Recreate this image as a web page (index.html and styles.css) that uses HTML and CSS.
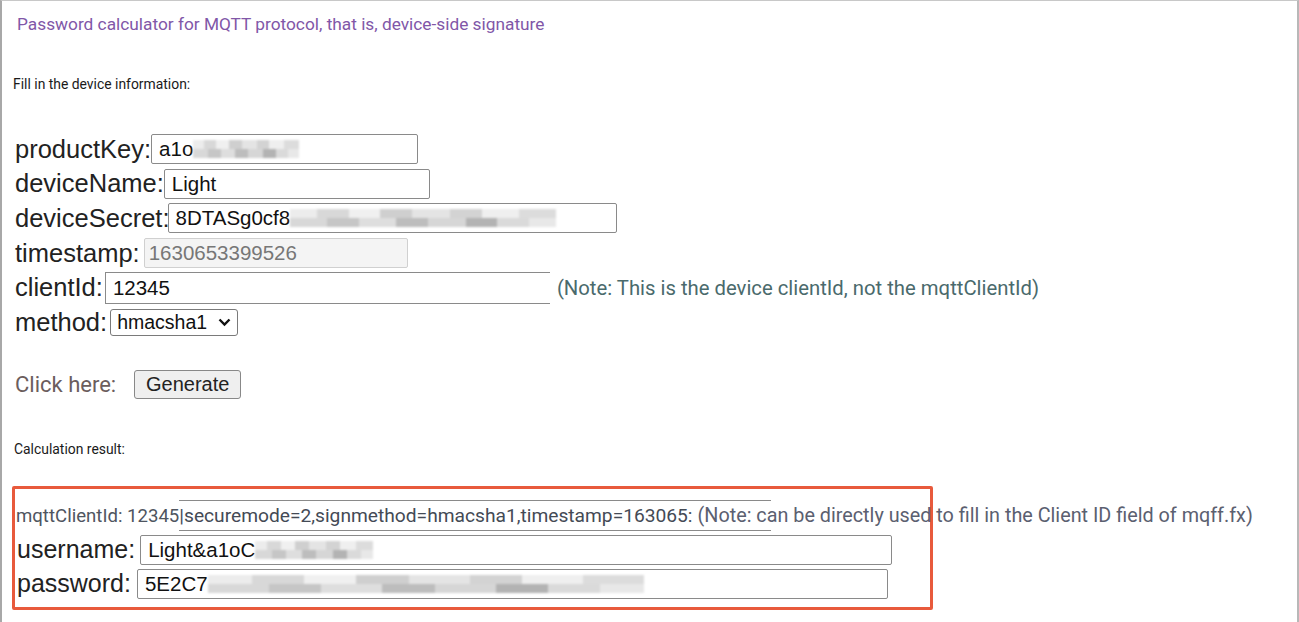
FILE: index.html
```html
<!DOCTYPE html>
<html lang="en">
<head>
    <meta charset="UTF-8">
    <meta name="viewport" content="width=device-width, initial-scale=1.0">
    <title>MQTT Password Calculator</title>
    <link rel="stylesheet" href="styles.css">
</head>
<body>
    <div class="page">
        <h1 class="title">Password calculator for MQTT protocol, that is, device-side signature</h1>

        <p class="hint">Fill in the device information:</p>

        <div class="device-form">
            <div class="row">
                <label>productKey:</label>
                <div class="field w-pk">a1o<span class="mosaic m-pk"></span></div>
            </div>
            <div class="row">
                <label>deviceName:</label>
                <div class="field w-dn">Light</div>
            </div>
            <div class="row">
                <label>deviceSecret:</label>
                <div class="field w-ds">8DTASg0cf8<span class="mosaic m-ds"></span></div>
            </div>
            <div class="row">
                <label>timestamp:</label>
                <div class="field w-ts disabled">1630653399526</div>
            </div>
            <div class="row">
                <label>clientId:</label>
                <div class="field w-cid open">12345</div>
                <span class="note">(Note: This is the device clientId, not the mqttClientId)</span>
            </div>
            <div class="row">
                <label>method:</label>
                <div class="select">hmacsha1
                    <svg width="13" height="9" viewBox="0 0 13 9"><path d="M1.5 1.5 L6.5 6.5 L11.5 1.5" fill="none" stroke="#111" stroke-width="2.4"/></svg>
                </div>
            </div>
        </div>

        <div class="action">
            <span class="click">Click here:</span>
            <button type="button">Generate</button>
        </div>

        <p class="hint result-hint">Calculation result:</p>

        <div class="result">
            <div class="client-line">mqttClientId: 12345<span class="idbox">|securemode=2,signmethod=hmacsha1,timestamp=163065: <span class="note2">(Note: can be directly used to fill in the Client ID field of mqff.fx)</span></span></div>
            <div class="row">
                <label>username:</label>
                <div class="field w-user">Light&amp;a1oC<span class="mosaic m-user"></span></div>
            </div>
            <div class="row">
                <label>password:</label>
                <div class="field w-pass">5E2C7<span class="mosaic m-pass"></span></div>
            </div>
        </div>
    </div>
</body>
</html>
```

FILE: styles.css
```css
* {
    margin: 0;
    padding: 0;
    box-sizing: border-box;
}

body {
    background: #fff;
    font-family: 'Liberation Sans', Arial, sans-serif;
}

.page {
    border-top: 1px solid #c8c8c8;
    border-left: 2px solid #a8a8a8;
    border-right: 2px solid #b8b8b8;
    width: 1299px;
    height: 640px;
    padding: 13px 0 0 11px;
}

.title {
    font-family: Roboto, sans-serif;
    font-weight: 400;
    font-size: 17.3px;
    color: #8157a8;
    margin-left: 4px;
    line-height: 20px;
}

.hint {
    font-family: Roboto, sans-serif;
    font-size: 13.9px;
    color: #1a1a1a;
    margin-top: 42px;
    line-height: 16px;
}

.device-form {
    margin-top: 40px;
    margin-left: 2px;
}

.row {
    display: flex;
    align-items: center;
    height: 34.6px;
}

.row label {
    font-size: 25.5px;
    color: #222;
}

.field {
    height: 30px;
    border: 1.5px solid #8a8a8a;
    border-radius: 2px;
    font-size: 20.5px;
    color: #111;
    padding: 0 7px;
    display: flex;
    align-items: center;
    white-space: nowrap;
}

.field.disabled {
    background: #f4f4f4;
    border-color: #d0d0d0;
    color: #777;
    padding-left: 4px;
}

.field.open {
    border-right: none;
    border-radius: 0;
    height: 32px;
}

.w-pk { width: 267px; }
.w-dn { width: 266px; }
.w-ds { width: 449px; margin-left: -2px; }
.w-ts { width: 264px; margin-left: 4px; }
.w-cid { width: 445px; margin-left: 2px; }
.w-user { width: 752px; margin-left: 5px; }
.w-pass { width: 751px; margin-left: 6px; }

.mosaic {
    display: inline-block;
    height: 18px;
    filter: blur(1px);
    background:
        linear-gradient(90deg, #ececec 0 10%, #d8d8d8 10% 22%, #f0f0f0 22% 34%, #cfcfcf 34% 46%, #e4e4e4 46% 60%, #d3d3d3 60% 72%, #efefef 72% 86%, #dcdcdc 86%) top / 100% 50% no-repeat,
        linear-gradient(90deg, #d8d8d8 0 14%, #c6c6c6 14% 26%, #dedede 26% 40%, #bdbdbd 40% 52%, #d6d6d6 52% 66%, #b3b3b3 66% 78%, #dadada 78% 90%, #e8e8e8 90%) bottom / 100% 50% no-repeat;
}

.m-pk { width: 106px; }
.m-ds { width: 266px; }
.m-user { width: 118px; }
.m-pass { width: 436px; }

.note {
    font-family: Roboto, sans-serif;
    font-size: 20.3px;
    color: #4a6a6c;
    margin-left: 7px;
}

.select {
    width: 128px;
    height: 27px;
    margin-left: 3px;
    border: 1.5px solid #7a7a7a;
    border-radius: 3px;
    font-size: 19.5px;
    color: #111;
    padding: 0 6px 0 6px;
    display: flex;
    align-items: center;
    justify-content: space-between;
}

.action {
    display: flex;
    align-items: center;
    margin-top: 30px;
    margin-left: 2px;
}

.click {
    font-family: Roboto, sans-serif;
    font-size: 22px;
    color: #6b5d5d;
}

button {
    margin-left: 18px;
    width: 107px;
    height: 29px;
    background: #efefef;
    border: 1.5px solid #888;
    border-radius: 3px;
    font-family: 'Liberation Sans', Arial, sans-serif;
    font-size: 20px;
    color: #222;
}

.result-hint {
    margin-top: 42px;
    margin-left: 1px;
}

.result {
    margin-top: 29px;
    margin-left: -1px;
    width: 921px;
    height: 124px;
    border: 3px solid #e85a3c;
    border-radius: 2px;
    padding: 10px 0 0 1px;
}

.client-line {
    font-family: Roboto, sans-serif;
    font-size: 18.6px;
    color: #4f5560;
    height: 34px;
    display: flex;
    align-items: center;
    white-space: nowrap;
}

.idbox {
    display: inline-flex;
    align-items: center;
    width: 592px;
    height: 31px;
    border-top: 1.5px solid #8a8a8a;
    border-bottom: 1.5px solid #8a8a8a;
    white-space: nowrap;
    overflow: visible;
    font-size: 19.2px;
    color: #444a55;
}

.note2 {
    font-size: 19.8px;
    color: #5b6070;
    margin-left: 5px;
}

.result .row {
    height: 34px;
    margin-left: 1px;
}

.result .row label {
    font-size: 25px;
}
```
